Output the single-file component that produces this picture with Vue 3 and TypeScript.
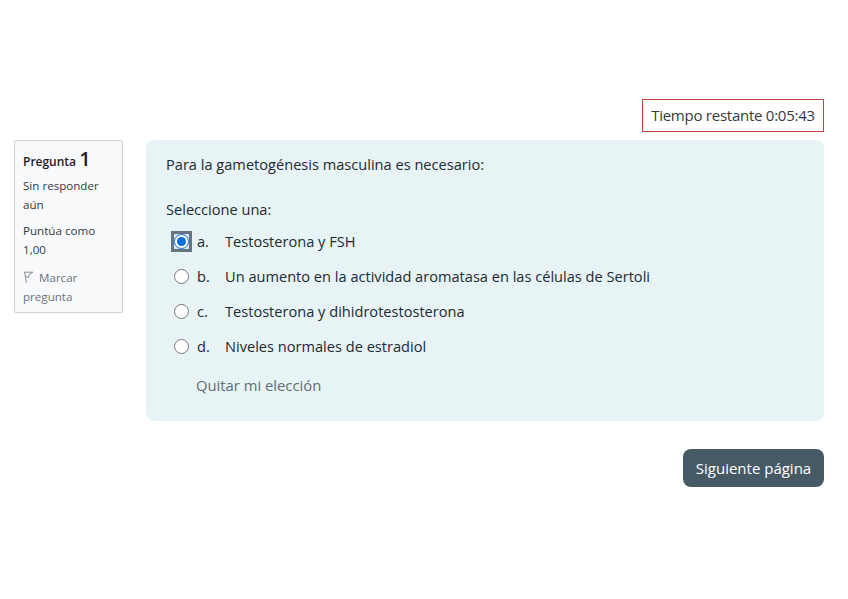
<script setup lang="ts">
import { ref } from 'vue'

const options = [
  { key: 'a.', text: 'Testosterona y FSH' },
  { key: 'b.', text: 'Un aumento en la actividad aromatasa en las células de Sertoli' },
  { key: 'c.', text: 'Testosterona y dihidrotestosterona' },
  { key: 'd.', text: 'Niveles normales de estradiol' }
]
const picked = ref('a.')
</script>

<template>
  <main class="page">
    <div class="timer-row">
      <div class="timer">Tiempo restante 0:05:43</div>
    </div>
    <div class="quiz">
      <aside class="info">
        <h3 class="qno">Pregunta <span>1</span></h3>
        <p class="state">Sin responder aún</p>
        <p class="grade">Puntúa como 1,00</p>
        <p class="flag">
          <svg class="flag-icon" width="11" height="13" viewBox="0 0 11 13" fill="none">
            <path d="M1.5 1 L3.4 12" stroke="#8a9096" stroke-width="1" />
            <path d="M1.5 1.2 H10 L6.4 3.4 L5.4 6.4 L2.4 5.4" stroke="#8a9096" stroke-width="1" stroke-linejoin="round" />
          </svg>
          Marcar pregunta
        </p>
      </aside>
      <section class="content">
        <p class="question">Para la gametogénesis masculina es necesario:</p>
        <p class="prompt">Seleccione una:</p>
        <div class="answers">
          <label v-for="opt in options" :key="opt.key" class="answer">
            <span class="radio-wrap" :class="{ focused: picked === opt.key }">
              <input v-model="picked" type="radio" name="q1" :value="opt.key" />
            </span>
            <span class="letter">{{ opt.key }}</span>
            <span>{{ opt.text }}</span>
          </label>
        </div>
        <a class="clear">Quitar mi elección</a>
      </section>
    </div>
    <div class="actions">
      <button class="next" type="button">Siguiente página</button>
    </div>
  </main>
</template>

<style scoped>
.page {
  box-sizing: border-box;
  width: 848px;
  height: 599px;
  padding: 99px 24px 0 14px;
  background: #fff;
  color: #1d2125;
  font-family: "Open Sans", "Noto Sans", sans-serif;
  font-size: 14.6px;
}

.timer-row {
  display: flex;
  justify-content: flex-end;
  margin-bottom: 8px;
}

.timer {
  box-sizing: border-box;
  width: 182px;
  height: 33px;
  border: 1px solid #c4453a;
  line-height: 31px;
  text-align: center;
  font-size: 15px;
  color: #343a40;
  letter-spacing: -0.25px;
}

.quiz {
  display: flex;
  align-items: flex-start;
  gap: 23px;
}

.info {
  box-sizing: border-box;
  width: 109px;
  height: 173px;
  padding: 8px 8px;
  flex: none;
  background: #f8f9fa;
  border: 1px solid #cdd3d9;
  border-radius: 2px;
  font-size: 11.6px;
  line-height: 19px;
  color: #343a40;
}

.qno {
  margin: 0 0 4px;
  font-size: 12px;
  font-weight: 600;
  line-height: 20px;
  color: #1d2125;
}

.qno span {
  font-size: 20px;
  font-weight: 600;
}

.state,
.grade {
  margin: 0 0 7px;
}

.flag {
  margin: 9px 0 0;
  color: #6a737b;
}

.flag-icon {
  margin-right: 2px;
  vertical-align: -2px;
}

.content {
  box-sizing: border-box;
  flex: 1;
  height: 281px;
  padding: 14px 20px;
  background: #e7f3f5;
  border-radius: 8px;
}

.question,
.prompt {
  margin: 0;
  line-height: 20px;
  color: #1d2b33;
}

.prompt {
  margin-top: 25px;
}

.answers {
  display: flex;
  flex-direction: column;
  gap: 15px;
  margin-top: 12px;
}

.answer {
  display: flex;
  align-items: center;
  height: 20px;
  line-height: 20px;
  font-size: 14.6px;
  color: #1d2b33;
}

.radio-wrap {
  display: flex;
  align-items: center;
  justify-content: center;
  box-sizing: border-box;
  width: 21px;
  height: 21px;
  margin-left: 5px;
  margin-right: 5px;
  flex: none;
}

.radio-wrap.focused {
  background: #d3e5f5;
  border: 3px solid #66757f;
}

.radio-wrap input {
  width: 15px;
  height: 15px;
  margin: 0;
  flex: none;
  accent-color: #0b6fe0;
}

.letter {
  width: 28px;
  flex: none;
}

.clear {
  display: block;
  margin: 19px 0 0 30px;
  line-height: 20px;
  font-size: 14.8px;
  color: #5f6f76;
}

.actions {
  display: flex;
  justify-content: flex-end;
  margin-top: 28px;
}

.next {
  width: 141px;
  height: 38px;
  padding: 0;
  background: #465a65;
  border: 0;
  border-radius: 8px;
  color: #fff;
  font-family: inherit;
  font-size: 15px;
}
</style>
